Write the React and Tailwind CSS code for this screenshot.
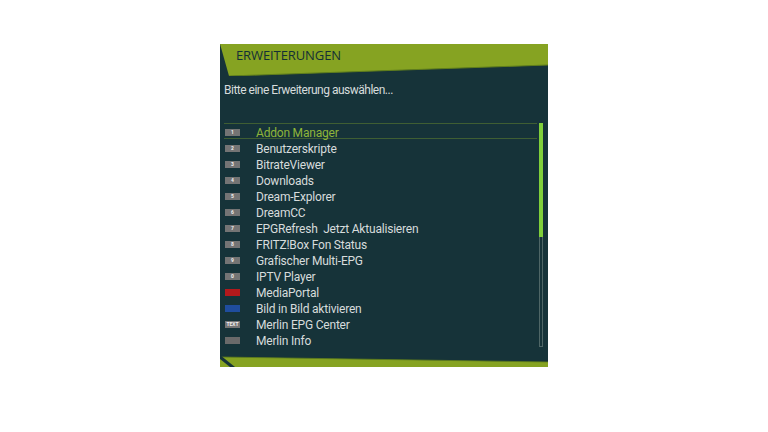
const items = [
  { key: "1", label: "Addon Manager" },
  { key: "2", label: "Benutzerskripte" },
  { key: "3", label: "BitrateViewer" },
  { key: "4", label: "Downloads" },
  { key: "5", label: "Dream-Explorer" },
  { key: "6", label: "DreamCC" },
  { key: "7", label: "EPGRefresh  Jetzt Aktualisieren" },
  { key: "8", label: "FRITZ!Box Fon Status" },
  { key: "9", label: "Grafischer Multi-EPG" },
  { key: "0", label: "IPTV Player" },
  { key: "red", label: "MediaPortal" },
  { key: "blue", label: "Bild in Bild aktivieren" },
  { key: "text", label: "Merlin EPG Center" },
  { key: "grey", label: "Merlin Info" },
];

function KeyBadge({ k }) {
  if (k === "red") return <div className="w-[15px] h-[7px] bg-[#b3191c]" />;
  if (k === "blue") return <div className="w-[15px] h-[7px] bg-[#1f4d9e]" />;
  if (k === "grey") return <div className="w-[15px] h-[7px] bg-[#6a6a6a]" />;
  return (
    <div className="w-[15px] h-[7px] bg-[#747474] flex items-center justify-center text-[5px] leading-none font-bold text-[#f0f0f0]">
      {k === "text" ? "TEXT" : k}
    </div>
  );
}

export default function App() {
  return (
    <div className="min-h-screen bg-white pt-[44px]">
      <div className="relative mx-auto w-[328px] h-[323px] bg-[#163339] overflow-hidden font-['Roboto',sans-serif]">
        <svg className="absolute left-0 top-0" width="328" height="32" viewBox="0 0 328 32">
          <polygon points="0,0 328,0 328,21 9,32" fill="#86a322" />
          <line x1="9" y1="32" x2="328" y2="21" stroke="#5f7d1c" strokeWidth="1" />
        </svg>
        <svg className="absolute left-0 bottom-0" width="328" height="12" viewBox="0 0 328 12">
          <polygon points="0,2 328,7 328,12 0,12" fill="#86a322" />
          <line x1="0" y1="2" x2="328" y2="7" stroke="#5f7d1c" strokeWidth="0.8" />
          <polygon points="0,0 0,4 10,12 15,12" fill="#163339" />
        </svg>

        <div className="relative h-[32px] pl-[16px] pt-[3px] font-['Open_Sans',sans-serif] text-[13px] font-medium leading-[16px] text-[#143035] tracking-[-0.1px]">
          ERWEITERUNGEN
        </div>

        <div className="relative mt-[6px] pl-[4px] text-[12px] leading-[16px] text-[#d7dcdc] tracking-[-0.5px]">
          Bitte eine Erweiterung auswählen...
        </div>

        <div className="relative mt-[25px] flex">
          <div className="w-[313px] ml-[4px]">
            {items.map(function (item, i) {
              var active = i === 0;
              return (
                <div
                  key={item.label}
                  className={
                    "h-[16px] flex items-center pt-[3px] " +
                    (active ? "border-y border-[#3f5e33]" : "")
                  }
                >
                  <div className="w-[32px] pl-[1px]">
                    <KeyBadge k={item.key} />
                  </div>
                  <div
                    className={
                      "text-[12px] leading-[16px] tracking-[-0.2px] whitespace-pre " +
                      (active ? "text-[#8fb53a]" : "text-[#d7dcdc]")
                    }
                  >
                    {item.label}
                  </div>
                </div>
              );
            })}
          </div>
          <div className="ml-[2px] w-[4px] h-[224px] border border-[#4f6666] flex flex-col">
            <div className="h-[114px] -m-px bg-[#7fcf3a]" />
          </div>
        </div>
      </div>
    </div>
  );
}
